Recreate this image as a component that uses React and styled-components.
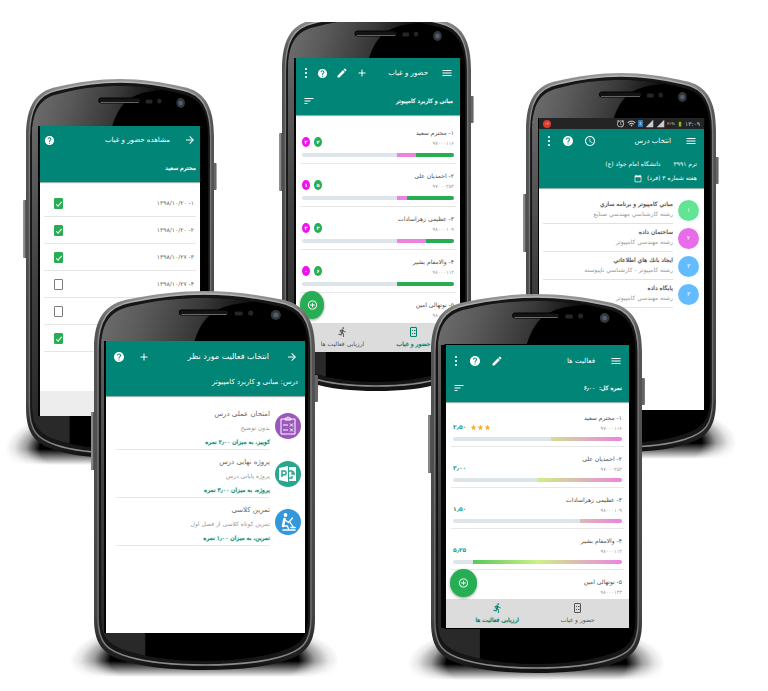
import React from "react";
import styled, { createGlobalStyle, css } from "styled-components";
import {
  MdHelp, MdAdd, MdEdit, MdMenu, MdSort, MdArrowForward, MdStar,
  MdAccessTime, MdDirectionsRun, MdAddCircleOutline, MdAlarm, MdWifi, MdSignalCellular4Bar,
  MdBatteryFull, MdBluetooth, MdCalendarToday,
} from "react-icons/md";

const TEAL = "#008577";
const GREEN = "#27ae55";
const PINK = "#ee82e1";
const MAGENTA = "#ee12ee";
const TRACK = "#dde5eb";

const GlobalStyle = createGlobalStyle`
  *, *::before, *::after { box-sizing: border-box; }
  body { margin: 0; background: #fff; }
  button { font: inherit; color: inherit; background: none; border: 0; padding: 0; margin: 0; }
  h2, h3, p, ul { margin: 0; padding: 0; font: inherit; }
  svg { display: block; }
`;

/* ---------- canvas and phones ---------- */

const Scene = styled.main`
  position: relative;
  min-height: 691px;
  overflow: hidden;
  font-family: "DejaVu Sans", sans-serif;
`;

const pct = (n) => `${(n / 768) * 100}%`;

const Phone = styled.section`
  position: absolute;
  left: ${(p) => pct(p.$x)};
  top: ${(p) => p.$y}px;
  width: ${(p) => pct(p.$w)};
  min-height: 380px;
  display: grid;
  padding: ${(p) => p.$pad};
  ${(p) => p.$cut && css`clip-path: inset(${p.$cut}px -8px -8px);`}
`;

const ShellArt = styled.svg`
  position: absolute;
  inset: 0;
  width: 100%;
  height: 100%;
  overflow: visible;
`;

const Screen = styled.div`
  position: relative;
  display: flex;
  flex-direction: column;
  min-width: 0;
  direction: rtl;
  background: #fff;
  box-shadow: -${(p) => p.$bezel || 2}px 0 0 #050505, 1px 0 0 #050505;
  color: #666;
  font-size: 7px;
  line-height: 10px;
  white-space: nowrap;
`;

function Shell({ id, shadow = true }) {
  const g = (n) => `${id}-${n}`;
  const body =
    "M0 58 C0 26 12 12 36 8 C60 3 85 0 110 0 C135 0 160 3 184 8 C208 12 220 26 220 58 L220 328 C220 356 208 365 186 371 C165 377 138 379 110 379 C82 379 55 377 34 371 C12 365 0 356 0 328 Z";
  const rim =
    "M4 58 C4 29 14 15 37 11 C61 6 85 3 110 3 C135 3 159 6 183 11 C206 15 216 29 216 58 L216 327 C216 353 206 360 185 366 C164 372 138 374 110 374 C82 374 56 372 35 366 C14 360 4 353 4 327 Z";
  const face =
    "M7 58 C7 32 16 19 38 15 C62 9 86 7 110 7 C134 7 158 9 182 15 C204 19 213 32 213 58 L213 325 C213 349 203 355 184 361 C163 367 137 370 110 370 C83 370 57 367 36 361 C17 355 7 349 7 325 Z";
  return (
    <ShellArt viewBox="0 0 220 380" preserveAspectRatio="none" aria-hidden="true">
      <defs>
        <radialGradient id={g("shadow")}>
          <stop offset="0.7" stopColor="#000" />
          <stop offset="0.82" stopColor="#000" stopOpacity="0.38" />
          <stop offset="0.92" stopColor="#000" stopOpacity="0.1" />
          <stop offset="1" stopColor="#000" stopOpacity="0" />
        </radialGradient>
        <linearGradient id={g("fade")} x1="0" y1="0" x2="0" y2="1">
          <stop offset="0.76" stopColor="#fff" />
          <stop offset="1" stopColor="#000" />
        </linearGradient>
        <mask id={g("floor")} maskUnits="userSpaceOnUse" x="-40" y="320" width="300" height="66">
          <rect x="-40" y="320" width="300" height="66" fill={`url(#${g("fade")})`} />
        </mask>
        <linearGradient id={g("edge")} x1="0" y1="0" x2="0" y2="1">
          <stop offset="0" stopColor="#9a9a9a" />
          <stop offset="0.1" stopColor="#565656" />
          <stop offset="0.85" stopColor="#444" />
          <stop offset="1" stopColor="#111" />
        </linearGradient>
        <linearGradient id={g("rim")} x1="0" y1="0" x2="0" y2="1">
          <stop offset="0" stopColor="#b5b5b5" />
          <stop offset="0.15" stopColor="#777" />
          <stop offset="0.88" stopColor="#6a6a6a" />
          <stop offset="1" stopColor="#8c8c8c" />
        </linearGradient>
        <linearGradient id={g("gloss")} x1="0" y1="0" x2="1" y2="0.1">
          <stop offset="0" stopColor="#747474" />
          <stop offset="0.35" stopColor="#5a5a5a" />
          <stop offset="0.7" stopColor="#383838" />
          <stop offset="1" stopColor="#0c0c0c" />
        </linearGradient>
        <linearGradient id={g("side")} x1="0" y1="0" x2="0" y2="1">
          <stop offset="0" stopColor="#666" />
          <stop offset="0.5" stopColor="#404040" />
          <stop offset="1" stopColor="#262626" />
        </linearGradient>
        <clipPath id={g("face")}><path d={face} /></clipPath>
      </defs>
      {shadow && (
        <ellipse cx="110" cy="370" rx="134" ry="44" fill={`url(#${g("shadow")})`} mask={`url(#${g("floor")})`} />
      )}
      <rect x="-3" y="121" width="6" height="58" rx="1" fill="#555" />
      <rect x="-3" y="121" width="2" height="58" rx="1" fill="#8a8a8a" />
      <rect x="218" y="84" width="5" height="27" rx="1" fill="#666" />
      <path d={body} fill={`url(#${g("edge")})`} />
      <path d={rim} fill="#161616" stroke={`url(#${g("rim")})`} strokeWidth="1.6" />
      <path d={face} fill="#000" />
      <g clipPath={`url(#${g("face")})`}>
        <rect x="0" y="48" width="14" height="300" fill={`url(#${g("side")})`} />
        <path d="M0 0 H160 V11 C128 13 110 19 100 50 H0 Z" fill={`url(#${g("gloss")})`} />
        <rect x="0" y="335" width="51" height="45" fill="#292929" />
      </g>
      <rect x="85" y="19" width="49" height="5" rx="2.500" fill="#141414" stroke="#000" strokeWidth="1" />
      <path d="M87 23.500 H132" stroke="#6a6a6a" strokeWidth="1" />
      <rect x="140" y="20.500" width="8" height="4" rx="1.500" fill="#262626" />
      <circle cx="156" cy="22" r="2.600" fill="#252525" />
      <ellipse cx="181" cy="24" rx="5" ry="5" fill="#33363b" />
      <circle cx="181" cy="24" r="2.500" fill="#535e70" />
    </ShellArt>
  );
}

/* ---------- header ---------- */

const Header = styled.header`
  display: flex;
  flex-direction: column;
  color: #fff;
  background: ${TEAL};
  padding: 0 ${(p) => p.$side || 7}px;
  height: ${(p) => p.$h || 57}px;
  box-shadow: 0 1px 1px rgba(0, 60, 50, 0.4);
  flex: none;
`;

const Bar = styled.div`
  display: flex;
  align-items: center;
  height: ${(p) => p.$h || 30}px;
  gap: ${(p) => p.$gap || 0}px;
`;

const Title = styled.h2`
  margin-inline-start: ${(p) => p.$start || 14}px;
  margin-inline-end: auto;
  font-size: ${(p) => p.$size || 7}px;
`;

const Actions = styled.div`
  display: flex;
  align-items: center;
  gap: ${(p) => p.$gap || 10}px;
`;

const IconButton = styled.button`
  display: grid;
  place-items: center;
  width: ${(p) => p.$size || 12}px;
  height: 14px;
  flex: none;
  svg { width: ${(p) => p.$size || 12}px; height: ${(p) => (p.$size || 12) + (p.$tall || 0)}px; }
`;

const DotsButton = styled(IconButton)`
  width: 6px;
  svg { width: 6px; height: 12px; }
`;

const Dots = () => (
  <svg viewBox="0 0 6 12" fill="currentColor">
    <circle cx="3" cy="2" r="1.100" />
    <circle cx="3" cy="6" r="1.100" />
    <circle cx="3" cy="10" r="1.100" />
  </svg>
);

const SubTitle = styled.p`
  font-size: ${(p) => p.$size || 6}px;
  margin-inline-end: auto;
  ${(p) => p.$strong && css`text-shadow: 0 0 1px #fff;`}
`;

/* ---------- student list ---------- */

const List = styled.ul`
  list-style: none;
  padding: ${(p) => p.$pad || "6px 4px 0"};
  flex: 1;
`;

const StudentRow = styled.li`
  height: ${(p) => p.$h}px;
  padding: 6px ${(p) => p.$side || 2}px 0;
  border-bottom: 1px solid #e8e8e8;
  &:last-child { border: 0; height: 26px; }
`;

const StudentLine = styled.div`
  display: flex;
  justify-content: space-between;
  align-items: flex-end;
  height: 21px;
`;

const StudentText = styled.div`
  display: flex;
  flex-direction: column;
`;

const Name = styled.h3`
  font-size: 6px;
  line-height: 11px;
  color: #4c4c4c;
`;

const Code = styled.p`
  font-size: 5px;
  line-height: 10px;
  color: #999;
`;

const Badges = styled.div`
  display: flex;
  gap: 4px;
  padding-bottom: 1px;
`;

const Badge = styled.span`
  display: grid;
  place-items: center;
  width: 8px;
  height: 10px;
  border-radius: 50%;
  color: #fff;
  font-size: 5px;
  font-weight: 700;
  line-height: 10px;
  background: ${(p) => p.$color};
`;

const Meter = styled.div`
  display: flex;
  height: 4px;
  margin-top: 5px;
  border-radius: 2px;
  overflow: hidden;
  background: ${TRACK};
`;

const Segment = styled.span`
  width: ${(p) => p.$w}%;
  background: ${(p) => p.$color};
`;

const GradientMeter = styled.div`
  height: 4px;
  margin-top: 4px;
  border-radius: 2px;
  background:
    linear-gradient(to left, transparent ${(p) => p.$w}%, ${TRACK} ${(p) => p.$w}%),
    linear-gradient(to left, ${PINK}, #cdf088 50%, #58c85c 88%);
`;

const Score = styled.div`
  display: flex;
  align-items: center;
  gap: 4px;
  color: #169a85;
  font-size: 6px;
  font-weight: 700;
  line-height: 12px;
`;

const Stars = styled.span`
  display: flex;
  svg { width: 7px; height: 7px; color: #fdb02c; }
`;

const Nav = styled.nav`
  display: grid;
  grid-template-columns: 1fr 1fr;
  height: 29px;
  padding: 0 11px;
  background: #dcdcdc;
  flex: none;
`;

const NavItem = styled.button`
  display: flex;
  flex-direction: column;
  align-items: center;
  justify-content: center;
  gap: 1px;
  font-size: 6px;
  line-height: 10px;
  color: ${(p) => (p.$on ? "#00806f" : "#555")};
  ${(p) => p.$on && css`text-shadow: 0 0 1px #14907e;`}
  svg { width: 11px; height: 12px; }
`;

const Fab = styled.button`
  position: absolute;
  left: 4px;
  bottom: ${(p) => p.$bottom}px;
  width: ${(p) => p.$w}px;
  height: 28px;
  border-radius: 50%;
  display: grid;
  place-items: center;
  color: #fff;
  background: ${GREEN};
  box-shadow: 0 1px 3px rgba(0, 0, 0, 0.4);
  svg { width: 11px; height: 12px; }
`;

const RosterIcon = () => (
  <svg viewBox="0 0 11 12" fill="none" stroke="currentColor" strokeWidth="1">
    <rect x="2.500" y="1.500" width="6" height="9" rx="0.500" />
    <path d="M4 4.500h1M6 4.500h1.500M4 7.500h1M6 7.500h1.500" />
  </svg>
);

function BottomNav({ active }) {
  return (
    <Nav>
      <NavItem $on={active === "attendance"}><RosterIcon />حضور و غیاب</NavItem>
      <NavItem $on={active === "activity"}><MdDirectionsRun />ارزیابی فعالیت ها</NavItem>
    </Nav>
  );
}

const students = [
  { name: "۱- محترم سعید", code: "۹۷۰۰۰۱۱۶", present: 4, absent: 2, score: "۲٫۵۰", fill: 42, stars: 3 },
  { name: "۲- احمدیان علی", code: "۹۷۰۰۰۲۵۴", present: 5, absent: 1, score: "۳٫۰۰", fill: 50 },
  { name: "۳- عظیمی زهراسادات", code: "۹۸۰۰۰۱۰۹", present: 3, absent: 3, score: "۱٫۵۰", fill: 25 },
  { name: "۴- والامقام بشیر", code: "۹۸۰۰۰۱۱۲", present: 6, absent: 0, score: "۵٫۲۵", fill: 88 },
  { name: "۵- نوتهالی امین", code: "۹۸۰۰۰۱۴۳" },
];
const fa = (n) => "۰۱۲۳۴۵۶۷۸۹"[n];

function AttendanceScreen() {
  return (
    <Screen>
      <Header>
        <Bar>
          <IconButton aria-label="منو"><MdMenu /></IconButton>
          <Title $start={13}>حضور و غیاب</Title>
          <Actions $gap={8}>
            <IconButton aria-label="افزودن"><MdAdd /></IconButton>
            <IconButton aria-label="ویرایش"><MdEdit /></IconButton>
            <IconButton aria-label="راهنما" $size={11} $tall={2}><MdHelp /></IconButton>
            <DotsButton aria-label="بیشتر"><Dots /></DotsButton>
          </Actions>
        </Bar>
        <Bar $h={26}>
          <SubTitle $strong>مبانی و کاربرد کامپیوتر</SubTitle>
          <IconButton aria-label="مرتب سازی"><MdSort /></IconButton>
        </Bar>
      </Header>
      <List>
        {students.map((s) => (
          <StudentRow key={s.code} $h={43}>
            <StudentLine>
              <StudentText><Name>{s.name}</Name><Code>{s.code}</Code></StudentText>
              {s.present && (
                <Badges>
                  <Badge $color={GREEN}>{fa(s.present)}</Badge>
                  <Badge $color={MAGENTA}>{fa(s.absent)}</Badge>
                </Badges>
              )}
            </StudentLine>
            {s.present && (
              <Meter>
                <Segment $w={s.present * 6.25} $color={GREEN} />
                <Segment $w={s.absent * 6.25} $color={PINK} />
              </Meter>
            )}
          </StudentRow>
        ))}
      </List>
      <BottomNav active="attendance" />
      <Fab aria-label="افزودن" $bottom={33} $w={24}><MdAddCircleOutline /></Fab>
    </Screen>
  );
}

function ActivityScreen() {
  return (
    <Screen $bezel={5}>
      <Header>
        <Bar $h={31}>
          <IconButton aria-label="منو"><MdMenu /></IconButton>
          <Title $start={15}>فعالیت ها</Title>
          <Actions $gap={10}>
            <IconButton aria-label="ویرایش"><MdEdit /></IconButton>
            <IconButton aria-label="راهنما"><MdHelp /></IconButton>
            <DotsButton aria-label="بیشتر"><Dots /></DotsButton>
          </Actions>
        </Bar>
        <Bar $h={24}>
          <SubTitle $strong>نمره کل:&nbsp; ۶٫۰۰</SubTitle>
          <IconButton aria-label="مرتب سازی"><MdSort /></IconButton>
        </Bar>
      </Header>
      <List $pad="4px 5px 0">
        {students.map((s) => (
          <StudentRow key={s.code} $h={41}>
            <StudentLine>
              <StudentText><Name>{s.name}</Name><Code>{s.code}</Code></StudentText>
              {s.score && (
                <Score>
                  {s.stars && <Stars>{Array.from({ length: s.stars }, (_, i) => <MdStar key={i} />)}</Stars>}
                  {s.score}
                </Score>
              )}
            </StudentLine>
            {s.fill && <GradientMeter $w={s.fill} />}
          </StudentRow>
        ))}
      </List>
      <BottomNav active="activity" />
      <Fab aria-label="افزودن" $bottom={31} $w={27}><MdAddCircleOutline /></Fab>
    </Screen>
  );
}

/* ---------- attendance history ---------- */

const DateRow = styled.li`
  height: 27px;
  border-bottom: 1px solid #e6e6e6;
`;

const DateLabel = styled.label`
  display: flex;
  align-items: center;
  justify-content: space-between;
  height: 100%;
  padding: 0 2px 0 10px;
  font-size: 6px;
`;

const Check = styled.input`
  appearance: none;
  margin: 0;
  width: 9px;
  height: 11px;
  border: 1px solid #7c7c7c;
  border-radius: 1px;
  display: grid;
  place-items: center;
  &:checked { background: ${GREEN}; border-color: ${GREEN}; }
  &:checked::before {
    content: "";
    width: 6px;
    height: 3px;
    border: solid #fff;
    border-width: 0 0 1px 1px;
    transform: rotate(-48deg);
  }
`;

const FooterBar = styled.footer`
  height: 25px;
  background: #ededed;
`;

const days = [
  { text: "۱- ۱۳۹۸/۱۰/۲۰", on: true },
  { text: "۲- ۱۳۹۸/۱۰/۲۰", on: true },
  { text: "۳- ۱۳۹۸/۱۰/۲۷", on: true },
  { text: "۴- ۱۳۹۸/۱۰/۲۷", on: false },
  { text: "", on: false },
  { text: "", on: true },
];

function HistoryScreen() {
  return (
    <Screen>
      <Header $h={56} $side={4}>
        <Bar>
          <Actions><IconButton aria-label="بازگشت"><MdArrowForward /></IconButton></Actions>
          <Title>مشاهده حضور و غیاب</Title>
          <IconButton aria-label="راهنما" $size={11} $tall={2}><MdHelp /></IconButton>
        </Bar>
        <Bar $h={30}><SubTitle $strong>محترم سعید</SubTitle></Bar>
      </Header>
      <List $pad="8px 4px 0">
        {days.map((d, i) => (
          <DateRow key={i}>
            <DateLabel>
              <span>{d.text}</span>
              <Check type="checkbox" defaultChecked={d.on} aria-label={`حضور ${fa(i + 1)}`} />
            </DateLabel>
          </DateRow>
        ))}
      </List>
      <FooterBar />
    </Screen>
  );
}

/* ---------- course picker ---------- */

const StatusBar = styled.div`
  display: flex;
  align-items: center;
  gap: 2px;
  height: 11px;
  padding: 0 4px;
  background: #242424;
  color: #ccc;
  font-size: 6px;
  direction: ltr;
  flex: none;
  svg { width: 9px; height: 9px; }
`;

const StatusDot = styled.span`
  width: 8px;
  height: 8px;
  margin-right: auto;
  border-radius: 50%;
  background: #dc3a30;
  font-size: 4px;
  line-height: 8px;
  text-align: center;
`;

const BlueTile = styled.span`
  background: #2878b8;
  svg { width: 5px; height: 7px; }
`;

const Charge = styled.span`
  font-size: 4px;
`;

const Battery = styled.span`
  svg { width: 6px; height: 8px; color: #86b81f; }
`;

const CourseItem = styled.li`
  display: flex;
  gap: 5px;
  height: 28px;
`;

const CourseText = styled.div`
  flex: 1;
  padding-top: 3px;
  border-bottom: 1px solid #e2e2e2;
`;

const CourseName = styled.h3`
  font-size: 6px;
  line-height: 10px;
  color: #444;
  text-shadow: 0 0 1px #999;
`;

const CourseField = styled.p`
  font-size: 6px;
  line-height: 10px;
  color: #999;
`;

const Disc = styled.span`
  display: grid;
  place-items: center;
  align-self: center;
  width: ${(p) => p.$size}px;
  height: ${(p) => p.$size}px;
  border-radius: 50%;
  color: #fff;
  font-size: 6px;
  background: ${(p) => p.$color};
  flex: none;
`;

const TermRow = styled(Bar)`
  font-size: 6px;
  svg { width: 8px; height: 9px; }
`;

const courses = [
  { n: "۱", color: "#62e592", name: "مباني كامپيوتر و برنامه سازي", field: "رشته كارشناسي مهندسي صنايع" },
  { n: "۲", color: "#e86ce8", name: "ساختمان داده", field: "رشته مهندسي كامپيوتر" },
  { n: "۳", color: "#62bcff", name: "ايجاد بانك هاي اطلاعاتي", field: "رشته كامپيوتر - كارشناسي ناپيوسته" },
  { n: "۳", color: "#62bcff", name: "پايگاه داده", field: "رشته مهندسي كامپيوتر" },
];

function CourseScreen() {
  return (
    <Screen $bezel={1}>
      <StatusBar>
        <StatusDot>۱۳</StatusDot>
        <MdAlarm /><MdWifi /><BlueTile><MdBluetooth /></BlueTile><MdSignalCellular4Bar /><MdSignalCellular4Bar />
        <Charge>۳۱%</Charge><Battery><MdBatteryFull /></Battery>
        <span>۱۳:۰۹</span>
      </StatusBar>
      <Header $h={59}>
        <Bar $h={24}>
          <IconButton aria-label="منو"><MdMenu /></IconButton>
          <Title>انتخاب درس</Title>
          <Actions $gap={10}>
            <IconButton aria-label="ساعت"><MdAccessTime /></IconButton>
            <IconButton aria-label="راهنما"><MdHelp /></IconButton>
            <DotsButton aria-label="بیشتر"><Dots /></DotsButton>
          </Actions>
        </Bar>
        <TermRow $h={22} $gap={13}><span>ترم ۳۹۹۱</span><span>دانشگاه امام جواد (ع)</span></TermRow>
        <TermRow $h={6} $gap={5}><span>هفته شماره ۳ (فرد)</span><MdCalendarToday /></TermRow>
      </Header>
      <List $pad="8px 5px 0 4px">
        {courses.map((c) => (
          <CourseItem key={c.name}>
            <Disc $size={21} $color={c.color}>{c.n}</Disc>
            <CourseText><CourseName>{c.name}</CourseName><CourseField>{c.field}</CourseField></CourseText>
          </CourseItem>
        ))}
      </List>
    </Screen>
  );
}

/* ---------- activity picker ---------- */

const TaskItem = styled.li`
  display: flex;
  gap: 5px;
  height: 48px;
`;

const TaskText = styled.div`
  flex: 1;
  padding-top: 5px;
  border-bottom: 1px solid #e8e8e8;
`;

const TaskLine = styled.p`
  font-size: ${(p) => p.$size || 6}px;
  line-height: 14px;
  color: ${(p) => p.$color || "#999"};
  ${(p) => p.$strong && css`text-shadow: 0 0 1px #14907e;`}
`;

const TaskDisc = styled(Disc)`
  svg { width: 18px; height: 20px; }
`;

const QuizArt = () => (
  <svg viewBox="0 0 18 20" fill="none" stroke="#fff" strokeWidth="1">
    <path d="M2 3h14v15H2zM6 3c0-1 1-1 2-1 0-1.500 2-1.500 2 0 1 0 2 0 2 1v1H6zM4 9h5M4 14h5M11 7.500l3 3M14 7.500l-3 3M11 12.500l3 3M14 12.500l-3 3" />
  </svg>
);

const ProjectArt = () => (
  <svg viewBox="0 0 18 20">
    <path d="M0 4L9 2v16L0 16z" fill="#fff" />
    <path d="M3 13V7h2.200a1.900 1.900 0 0 1 0 3.800H3" fill="none" stroke="#2aa58e" strokeWidth="1.500" />
    <path d="M10 3h7v14h-7z" fill="#fff" />
    <path d="M10 7h3v3h3M12 7a3 3 0 0 1 3 3M10 14h3v-2" fill="none" stroke="#2aa58e" strokeWidth="1.300" />
  </svg>
);

const DeskArt = () => (
  <svg viewBox="0 0 18 20" fill="none" stroke="#fff" strokeLinecap="round" strokeLinejoin="round">
    <circle cx="6.500" cy="3" r="1.900" fill="#fff" stroke="none" />
    <path d="M5.500 7l-1.500 7" strokeWidth="2.600" />
    <path d="M5.500 7.500l4 3 4-4.500M4.500 14h4l1 3M10.500 9.500l4 6" strokeWidth="1.300" />
    <path d="M4 18h12M12 15.500h4" strokeWidth="1.600" />
  </svg>
);

const tasks = [
  { art: <QuizArt />, color: "#9b57bb", name: "امتحان عملی درس", note: "بدون توضیح", worth: "کوییز، به میزان ۲٫۰۰ نمره" },
  { art: <ProjectArt />, color: "#2aa58e", name: "پروژه نهایی درس", note: "پروژه پایانی درس", worth: "پروژه، به میزان ۳٫۰۰ نمره" },
  { art: <DeskArt />, color: "#3397dc", name: "تمرین کلاسی", note: "تمرین کوتاه کلاسی از فصل اول", worth: "تمرین، به میزان ۱٫۰۰ نمره" },
];

function TaskScreen() {
  return (
    <Screen>
      <Header $h={55}>
        <Bar $h={32}>
          <IconButton aria-label="بازگشت"><MdArrowForward /></IconButton>
          <Title $start={17} $size={8}>انتخاب فعالیت مورد نظر</Title>
          <Actions $gap={13}>
            <IconButton aria-label="افزودن"><MdAdd /></IconButton>
            <IconButton aria-label="راهنما"><MdHelp /></IconButton>
          </Actions>
        </Bar>
        <Bar $h={18}><SubTitle $size={7}>درس: مبانی و کاربرد کامپیوتر</SubTitle></Bar>
      </Header>
      <List $pad="6px 4px 0 10px">
        {tasks.map((t) => (
          <TaskItem key={t.name}>
            <TaskDisc $size={26} $color={t.color}>{t.art}</TaskDisc>
            <TaskText>
              <TaskLine $size={7} $color="#666">{t.name}</TaskLine>
              <TaskLine>{t.note}</TaskLine>
              <TaskLine $color="#00806f" $strong>{t.worth}</TaskLine>
            </TaskText>
          </TaskItem>
        ))}
      </List>
    </Screen>
  );
}

export default function App() {
  return (
    <>
      <GlobalStyle />
      <Scene lang="fa">
        <Phone $x={26} $y={79} $w={188} $pad="47px 14px 43px 14px">
          <Shell id="history" />
          <HistoryScreen />
        </Phone>
        <Phone $x={282} $y={12} $w={189} $pad="46px 11px 40px 14px" $cut={10}>
          <Shell id="attendance" shadow={false} />
          <AttendanceScreen />
        </Phone>
        <Phone $x={526} $y={73} $w={190} $pad="45px 12px 43px 13px">
          <Shell id="course" />
          <CourseScreen />
        </Phone>
        <Phone $x={94} $y={291} $w={221} $pad="50px 10px 38px 12px">
          <Shell id="task" />
          <TaskScreen />
        </Phone>
        <Phone $x={431} $y={294} $w={211} $pad="51px 13px 46px 15px">
          <Shell id="activity" />
          <ActivityScreen />
        </Phone>
      </Scene>
    </>
  );
}
